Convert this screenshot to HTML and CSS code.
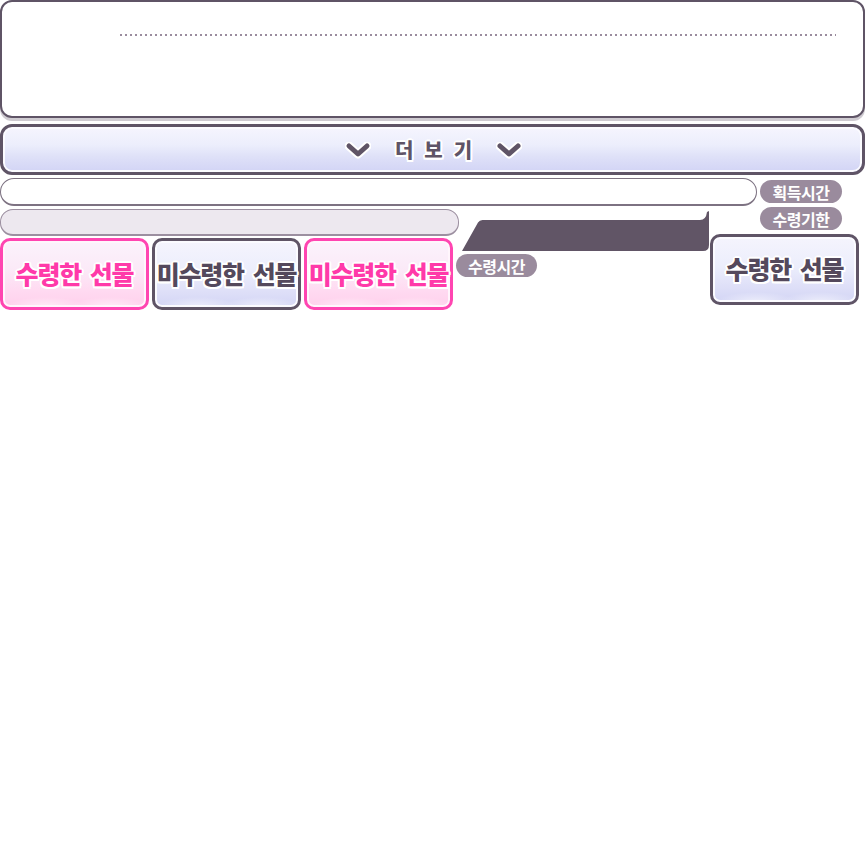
FILE: index.html
```html
<!DOCTYPE html>
<html lang="ko">
<head>
<meta charset="utf-8">
<title>선물함</title>
<link rel="stylesheet" href="styles.css">
</head>
<body>
<div class="page">
  <div class="panel"><div class="dots"></div></div>

  <div class="more-bar">
    <svg class="chev" viewBox="0 0 26 18" width="26" height="18"><path d="M4 4 L13 12 L22 4" fill="none" stroke="#fff" stroke-width="9" stroke-linecap="round" stroke-linejoin="round"/><path d="M4 4 L13 12 L22 4" fill="none" stroke="#5f5466" stroke-width="5" stroke-linecap="round" stroke-linejoin="round"/></svg>
    <span class="more-text"><span>더</span><span>보</span><span>기</span></span>
    <svg class="chev" viewBox="0 0 26 18" width="26" height="18"><path d="M4 4 L13 12 L22 4" fill="none" stroke="#fff" stroke-width="9" stroke-linecap="round" stroke-linejoin="round"/><path d="M4 4 L13 12 L22 4" fill="none" stroke="#5f5466" stroke-width="5" stroke-linecap="round" stroke-linejoin="round"/></svg>
  </div>

  <div class="row-a">
    <div class="field-white"></div>
    <span class="tag tag-get">획득시간</span>
  </div>

  <div class="row-b">
    <div class="col-left">
      <div class="field-gray"></div>
      <div class="btn-row">
        <div class="btn pink"><span>수령한 선물</span></div>
        <div class="btn lav"><span>미수령한 선물</span></div>
        <div class="btn pink"><span>미수령한 선물</span></div>
      </div>
    </div>
    <div class="col-mid">
      <svg class="tab" viewBox="0 0 247 41" width="247" height="41"><path d="M0 41 L16 12.5 Q17.5 10 20.5 10 L238 10 Q244 10 245 2 L247 1 L247 35 Q247 41 241 41 Z" fill="#615566"/></svg>
      <span class="tag tag-time">수령시간</span>
    </div>
    <div class="col-right">
      <span class="tag tag-limit">수령기한</span>
      <div class="btn lav big"><span>수령한 선물</span></div>
    </div>
  </div>
</div>
</body>
</html>
```
FILE: styles.css
```css
* { box-sizing: border-box; }
html, body { margin: 0; padding: 0; background: #fff; }
body { font-family: "Noto Sans CJK KR", "Noto Sans", sans-serif; }
.page { width: 866px; }

.panel {
  position: relative;
  width: 865px;
  height: 118px;
  border: 2px solid #5f5466;
  border-radius: 12px;
  background: #fff;
  box-shadow: 0 3px 0 #cfcbd1;
}
.dots {
  margin: 32px 27px 0 118px;
  height: 2px;
  background: repeating-linear-gradient(90deg, #9a8c9e 0 2px, transparent 2px 5px);
}

.more-bar {
  margin-top: 6px;
  width: 865px;
  height: 51px;
  border: 3px solid #5f5466;
  border-radius: 12px;
  background: linear-gradient(#f6f5fe 0%, #eceefc 40%, #dfe1f8 65%, #d2d4f5 100%);
  box-shadow: inset 0 0 0 2px #fbfbff;
  display: flex;
  align-items: center;
  justify-content: center;
  gap: 24px;
  padding-left: 2px;
}
.chev { display: block; margin-top: 2px; }
.more-text {
  display: flex;
  gap: 11px;
  font-size: 20px;
  font-weight: 900;
  color: #5f5466;
  text-shadow: -2px 0 #fff, 2px 0 #fff, 0 -2px #fff, 0 2px #fff, -1.5px -1.5px #fff, 1.5px 1.5px #fff, -1.5px 1.5px #fff, 1.5px -1.5px #fff;
  line-height: 1;
}

.row-a {
  margin-top: 3px;
  display: flex;
  align-items: flex-start;
  height: 28px;
}
.field-white {
  width: 757px;
  height: 28px;
  border: 1px solid #7d7282;
  border-bottom-width: 2px;
  border-radius: 14px;
  background: #fff;
}
.tag {
  display: inline-flex;
  align-items: center;
  justify-content: center;
  width: 82px;
  height: 23px;
  border-radius: 12px;
  background: #9a8b9d;
  color: #fff;
  font-size: 16px;
  font-weight: 700;
  line-height: 1;
  letter-spacing: -0.5px;
}
.tag-get { margin: 2px 0 0 3px; }

.row-b {
  display: flex;
  align-items: flex-start;
  margin-top: 1px;
}
.col-left { width: 456px; }
.field-gray {
  margin-top: 2px;
  width: 459px;
  height: 27px;
  border: 1px solid #9c8fa0;
  border-bottom-width: 2px;
  border-radius: 13px;
  background: #ede8ef;
}
.btn-row {
  margin-top: 2px;
  display: flex;
  gap: 3px;
}
.btn {
  width: 149px;
  height: 72px;
  border: 3px solid #5f5466;
  border-radius: 10px;
  display: flex;
  align-items: center;
  justify-content: center;
  font-size: 25px;
  font-weight: 900;
  letter-spacing: -1.2px;
  word-spacing: 3px;
  white-space: nowrap;
}
.btn span { margin-top: -3px; }
.btn.pink {
  border-color: #ff45b1;
  background:
    radial-gradient(ellipse 40px 10px at 30% 100%, rgba(255,255,255,0.6), transparent),
    radial-gradient(ellipse 40px 10px at 75% 100%, rgba(255,255,255,0.6), transparent),
    linear-gradient(#fbf3fc 0%, #fbe9f7 45%, #ffdaf1 75%, #ffd0ec 100%);
  box-shadow: inset 0 0 0 2px #fff6fc;
  color: #ff3aa9;
  text-shadow: -2px 0 #fff, 2px 0 #fff, 0 -2px #fff, 0 2px #fff, -1.5px -1.5px #fff, 1.5px 1.5px #fff, -1.5px 1.5px #fff, 1.5px -1.5px #fff;
}
.btn.lav {
  border-color: #5f5466;
  background:
    radial-gradient(ellipse 40px 10px at 30% 100%, rgba(255,255,255,0.6), transparent),
    radial-gradient(ellipse 40px 10px at 75% 100%, rgba(255,255,255,0.6), transparent),
    linear-gradient(#f5f4fd 0%, #eceefc 45%, #dfe0f8 75%, #d3d5f5 100%);
  box-shadow: inset 0 0 0 2px #fbfbff;
  color: #54495c;
  text-shadow: -2px 0 #fff, 2px 0 #fff, 0 -2px #fff, 0 2px #fff, -1.5px -1.5px #fff, 1.5px 1.5px #fff, -1.5px 1.5px #fff, 1.5px -1.5px #fff;
}

.col-mid {
  width: 254px;
  display: flex;
  flex-direction: column;
  align-items: flex-start;
}
.tab { display: block; margin: 3px 0 0 6px; }
.tag-time { margin-top: 3px; width: 81px; }

.col-right {
  display: flex;
  flex-direction: column;
  align-items: flex-start;
}
.tag-limit { margin-left: 50px; }
.btn.big { margin-top: 4px; width: 149px; height: 71px; }
```
